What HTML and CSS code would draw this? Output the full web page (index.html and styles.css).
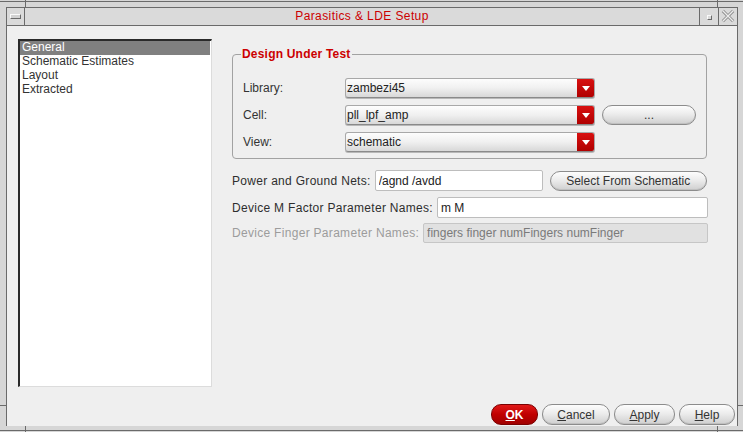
FILE: index.html
```html
<!DOCTYPE html>
<html lang="en">
<head>
  <meta charset="UTF-8" />
  <title>Parasitics &amp; LDE Setup</title>
  <link rel="stylesheet" href="styles.css">
</head>
<body>

  <div class="frame">
    <span class="tick tick-tl"></span>
    <span class="tick tick-tr"></span>
    <span class="tick tick-bl"></span>
    <span class="tick tick-br"></span>
    <span class="notch notch-l"></span>
    <span class="notch notch-r"></span>

    <div class="window">
      <div class="titlebar">
        <div class="tb-btn tb-menu"><span class="menu-bar"></span></div>
        <div class="title">Parasitics &amp; LDE Setup</div>
        <div class="tb-btn tb-min"><span class="min-box"></span></div>
        <div class="tb-btn tb-close">
          <!-- close cross -->
          <svg viewBox="0 0 19 17" width="19" height="17" aria-hidden="true">
            <path d="M4 2.5 L15 13.5 M15 2.5 L4 13.5" stroke="#8a8a8a" stroke-width="3.2" fill="none"/>
            <path d="M4 2.5 L15 13.5 M15 2.5 L4 13.5" stroke="#ececec" stroke-width="1.4" fill="none"/>
          </svg>
        </div>
      </div>

      <div class="content">
        <div class="main">
          <ul class="nav-list">
            <li class="selected">General</li>
            <li>Schematic Estimates</li>
            <li>Layout</li>
            <li>Extracted</li>
          </ul>

          <div class="panel">
            <fieldset class="group">
              <legend>Design Under Test</legend>
              <div class="dut-grid">
                <label>Library:</label>
                <div class="combo"><span class="combo-text">zambezi45</span><span class="combo-arrow"><svg viewBox="0 0 8 5" width="8" height="5"><polygon points="0,0 8,0 4,5" fill="#fff"/></svg></span></div>
                <span></span>

                <label>Cell:</label>
                <div class="combo"><span class="combo-text">pll_lpf_amp</span><span class="combo-arrow"><svg viewBox="0 0 8 5" width="8" height="5"><polygon points="0,0 8,0 4,5" fill="#fff"/></svg></span></div>
                <button class="pill browse">...</button>

                <label>View:</label>
                <div class="combo"><span class="combo-text">schematic</span><span class="combo-arrow"><svg viewBox="0 0 8 5" width="8" height="5"><polygon points="0,0 8,0 4,5" fill="#fff"/></svg></span></div>
                <span></span>
              </div>
            </fieldset>

            <div class="field-row">
              <label>Power and Ground Nets:</label>
              <input class="text-field nets" type="text" value="/agnd /avdd">
              <button class="pill select-btn">Select From Schematic</button>
            </div>

            <div class="field-row">
              <label>Device M Factor Parameter Names:</label>
              <input class="text-field grow" type="text" value="m M">
            </div>

            <div class="field-row disabled">
              <label>Device Finger Parameter Names:</label>
              <input class="text-field grow" type="text" value="fingers finger numFingers numFinger" disabled>
            </div>
          </div>
        </div>

        <div class="footer">
          <button class="pill ok"><u>O</u>K</button>
          <button class="pill cancel"><u>C</u>ancel</button>
          <button class="pill apply"><u>A</u>pply</button>
          <button class="pill help"><u>H</u>elp</button>
        </div>
      </div>
    </div>
  </div>

</body>
</html>
```

FILE: styles.css
```css
* {
  box-sizing: border-box;
  margin: 0;
  padding: 0;
}

body {
  width: 743px;
  height: 432px;
  overflow: hidden;
  background: #d6d6d6;
  font-family: 'Liberation Sans', Arial, sans-serif;
  font-size: 12px;
  color: #2e2e2e;
}

/* outer window manager frame */
.frame {
  position: relative;
  width: 743px;
  height: 432px;
  padding: 7px 5px 6px 6px;
  background:
    linear-gradient(#6a6a6a, #6a6a6a) 0 1px / 100% 1px no-repeat,
    linear-gradient(#6a6a6a, #6a6a6a) 0 430px / 100% 1px no-repeat,
    #d6d6d6;
}

.tick {
  position: absolute;
  width: 1px;
  height: 7px;
  background: #6a6a6a;
}
.tick-tl { left: 25px; top: 0; }
.tick-tr { left: 717px; top: 0; }
.tick-bl { left: 25px; top: 426px; height: 6px; }
.tick-br { left: 717px; top: 426px; height: 6px; }

.notch {
  position: absolute;
  top: 405px;
  height: 1px;
  background: #6a6a6a;
}
.notch-l { left: 0; width: 6px; }
.notch-r { left: 738px; width: 5px; }

.window {
  height: 100%;
  display: flex;
  flex-direction: column;
  border: 1px solid #6a6a6a;
  border-bottom: none;
  background: #efefef;
}

/* title bar */
.titlebar {
  height: 18px;
  display: flex;
  background: #dadada;
  border-bottom: 1px solid #6a6a6a;
  flex-shrink: 0;
}

.tb-btn {
  width: 19px;
  display: flex;
  align-items: center;
  justify-content: center;
}
.tb-menu {
  width: 18px;
  border-right: 1px solid #6a6a6a;
}
.tb-min,
.tb-close {
  border-left: 1px solid #6a6a6a;
}

.menu-bar {
  width: 11px;
  height: 5px;
  border: 1px solid;
  border-color: #fafafa #6a6a6a #6a6a6a #fafafa;
  background: #d2d2d2;
}

.min-box {
  width: 5px;
  height: 5px;
  margin-top: 2px;
  border: 1px solid;
  border-color: #fafafa #6a6a6a #6a6a6a #fafafa;
}

.title {
  flex: 1;
  text-align: center;
  line-height: 17px;
  color: #cc0000;
  letter-spacing: 0.4px;
}

/* dialog body */
.content {
  flex: 1;
  display: flex;
  flex-direction: column;
  padding: 13px 2px 0 11px;
}

.main {
  display: flex;
  gap: 20px;
}

.nav-list {
  list-style: none;
  width: 194px;
  height: 348px;
  background: #fff;
  border-top: 2px solid #2a2a2a;
  border-left: 2px solid #2a2a2a;
  border-right: 1px solid #dcdcdc;
  border-bottom: 1px solid #dcdcdc;
}
.nav-list li {
  height: 14px;
  line-height: 13px;
  padding-left: 2px;
  margin-right: 1px;
  color: #333;
}
.nav-list li.selected {
  background: #808080;
  color: #fff;
}

.panel {
  width: 476px;
  padding-top: 8px;
}

.group {
  width: 475px;
  border: 1px solid #a2a2a2;
  border-radius: 4px;
  padding: 16px 10px 6px 10px;
}
.group legend {
  margin-left: -2px;
  padding: 0 1px;
  color: #cc0000;
  font-weight: bold;
  font-size: 12px;
  letter-spacing: 0.2px;
  line-height: 15px;
}

.dut-grid {
  display: grid;
  grid-template-columns: 95px 250px 94px;
  column-gap: 7px;
  row-gap: 7px;
  align-items: center;
}
.dut-grid label {
  color: #333;
}

.combo {
  height: 20px;
  display: flex;
  border: 1px solid #a8a8a8;
  border-bottom-color: #8a8a8a;
  border-radius: 3px;
  background: linear-gradient(#fdfdfd, #f0f0f0 50%, #d8d8d8);
  box-shadow: 0 1px 0 #b8b8b8;
  overflow: hidden;
}
.combo-text {
  flex: 1;
  line-height: 18px;
  padding-left: 1px;
  color: #222;
}
.combo-arrow {
  width: 17px;
  display: flex;
  align-items: center;
  justify-content: center;
  background: linear-gradient(#d81010, #b00000);
}

.pill {
  font-family: 'Liberation Sans', Arial, sans-serif;
  font-size: 12px;
  color: #333;
  height: 21px;
  border: 1px solid #8c8c8c;
  border-radius: 10px;
  background: linear-gradient(#fdfdfd, #ececec 45%, #cfcfcf);
  box-shadow: inset 0 -1px 0 #c0c0c0;
}
.pill u {
  text-decoration-thickness: 1px;
  text-underline-offset: 1px;
}

.browse {
  width: 94px;
  height: 20px;
}

.field-row {
  display: flex;
  align-items: center;
  margin-top: 6px;
}
.field-row:first-of-type {
  margin-top: 11px;
}
.field-row label {
  white-space: nowrap;
  letter-spacing: 0.3px;
  margin-right: 4px;
}

.text-field {
  height: 21px;
  border: 1px solid #bdbdbd;
  border-radius: 2px;
  background: #fff;
  font-family: 'Liberation Sans', Arial, sans-serif;
  font-size: 12px;
  color: #222;
  padding: 0 3px;
  outline: none;
}
.text-field.nets {
  width: 168px;
}
.text-field.grow {
  flex: 1;
}

.select-btn {
  width: 157px;
  margin-left: 7px;
  height: 20px;
}

.field-row.disabled {
  margin-top: 5px;
}
.field-row.disabled label {
  color: #9c9c9c;
}
.field-row.disabled .text-field {
  height: 20px;
  background: #e1e1e1;
  color: #7a7a7a;
  border-color: #c6c6c6;
}

.footer {
  margin-top: auto;
  margin-bottom: 1px;
  display: flex;
  justify-content: flex-end;
  gap: 4px;
}
.footer .pill {
  height: 21px;
}
.ok {
  width: 47px;
  color: #fff;
  font-weight: bold;
  border-color: #7a0000;
  background: linear-gradient(#e01818, #c00000 50%, #a00000);
  box-shadow: none;
}
.cancel { width: 68px; }
.apply { width: 61px; }
.help { width: 56px; }
```
